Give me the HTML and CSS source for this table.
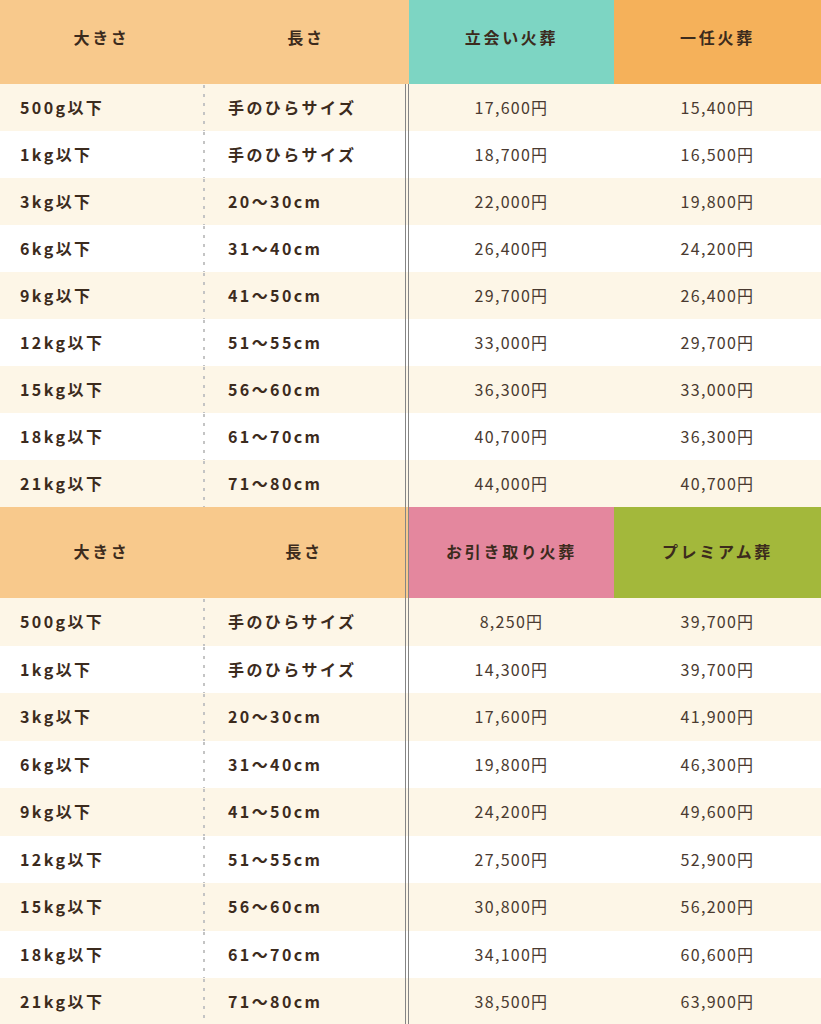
FILE: index.html
```html
<!DOCTYPE html>
<html lang="ja">
<head>
<meta charset="utf-8">
<title>料金表</title>
<link rel="stylesheet" href="styles.css">
</head>
<body>
<div class="price-table first">
  <div class="row head">
    <div class="cell c1">大きさ</div>
    <div class="cell c2">長さ</div>
    <div class="cell c3 teal">立会い火葬</div>
    <div class="cell c4 orange">一任火葬</div>
  </div>
  <div class="row"><div class="cell c1">500g以下</div><div class="cell c2">手のひらサイズ</div><div class="cell c3">17,600円</div><div class="cell c4">15,400円</div></div>
  <div class="row"><div class="cell c1">1kg以下</div><div class="cell c2">手のひらサイズ</div><div class="cell c3">18,700円</div><div class="cell c4">16,500円</div></div>
  <div class="row"><div class="cell c1">3kg以下</div><div class="cell c2">20〜30cm</div><div class="cell c3">22,000円</div><div class="cell c4">19,800円</div></div>
  <div class="row"><div class="cell c1">6kg以下</div><div class="cell c2">31〜40cm</div><div class="cell c3">26,400円</div><div class="cell c4">24,200円</div></div>
  <div class="row"><div class="cell c1">9kg以下</div><div class="cell c2">41〜50cm</div><div class="cell c3">29,700円</div><div class="cell c4">26,400円</div></div>
  <div class="row"><div class="cell c1">12kg以下</div><div class="cell c2">51〜55cm</div><div class="cell c3">33,000円</div><div class="cell c4">29,700円</div></div>
  <div class="row"><div class="cell c1">15kg以下</div><div class="cell c2">56〜60cm</div><div class="cell c3">36,300円</div><div class="cell c4">33,000円</div></div>
  <div class="row"><div class="cell c1">18kg以下</div><div class="cell c2">61〜70cm</div><div class="cell c3">40,700円</div><div class="cell c4">36,300円</div></div>
  <div class="row"><div class="cell c1">21kg以下</div><div class="cell c2">71〜80cm</div><div class="cell c3">44,000円</div><div class="cell c4">40,700円</div></div>
</div>
<div class="price-table second">
  <div class="row head">
    <div class="cell c1">大きさ</div>
    <div class="cell c2">長さ</div>
    <div class="cell c3 pink">お引き取り火葬</div>
    <div class="cell c4 green">プレミアム葬</div>
  </div>
  <div class="row"><div class="cell c1">500g以下</div><div class="cell c2">手のひらサイズ</div><div class="cell c3">8,250円</div><div class="cell c4">39,700円</div></div>
  <div class="row"><div class="cell c1">1kg以下</div><div class="cell c2">手のひらサイズ</div><div class="cell c3">14,300円</div><div class="cell c4">39,700円</div></div>
  <div class="row"><div class="cell c1">3kg以下</div><div class="cell c2">20〜30cm</div><div class="cell c3">17,600円</div><div class="cell c4">41,900円</div></div>
  <div class="row"><div class="cell c1">6kg以下</div><div class="cell c2">31〜40cm</div><div class="cell c3">19,800円</div><div class="cell c4">46,300円</div></div>
  <div class="row"><div class="cell c1">9kg以下</div><div class="cell c2">41〜50cm</div><div class="cell c3">24,200円</div><div class="cell c4">49,600円</div></div>
  <div class="row"><div class="cell c1">12kg以下</div><div class="cell c2">51〜55cm</div><div class="cell c3">27,500円</div><div class="cell c4">52,900円</div></div>
  <div class="row"><div class="cell c1">15kg以下</div><div class="cell c2">56〜60cm</div><div class="cell c3">30,800円</div><div class="cell c4">56,200円</div></div>
  <div class="row"><div class="cell c1">18kg以下</div><div class="cell c2">61〜70cm</div><div class="cell c3">34,100円</div><div class="cell c4">60,600円</div></div>
  <div class="row"><div class="cell c1">21kg以下</div><div class="cell c2">71〜80cm</div><div class="cell c3">38,500円</div><div class="cell c4">63,900円</div></div>
</div>
</body>
</html>
```
FILE: styles.css
```css
html, body {
  margin: 0;
  padding: 0;
  background: #fff;
}
body {
  font-family: "Noto Sans CJK JP", "Noto Sans", sans-serif;
  color: #3c2b1d;
  width: 821px;
  overflow: hidden;
}
.price-table.first {
  margin-top: -7px;
}
.row {
  display: grid;
  grid-template-columns: 203px 206px 205px 207px;
  height: 47px;
}
.row:nth-child(even) {
  background: #fdf6e7;
}
.row:nth-child(odd) {
  background: #ffffff;
}
.second .row:not(.head) {
  height: 47.5px;
}
.cell {
  display: flex;
  align-items: center;
  box-sizing: border-box;
  font-size: 16px;
  line-height: 1;
  white-space: nowrap;
  padding-bottom: 1px;
}
.row .c1,
.row .c2 {
  font-weight: 700;
  letter-spacing: 0.15em;
}
.row .c1 {
  padding-left: 20px;
}
.row .c2 {
  padding-left: 25px;
  background-image: linear-gradient(#c4c4c4 3px, transparent 3px);
  background-size: 2px 9px;
  background-repeat: repeat-y;
  background-position: 0 1px;
  border-right: 4px double #858585;
}
.row .c3,
.row .c4 {
  justify-content: center;
  color: #4a3a30;
  font-weight: 400;
  letter-spacing: 0.08em;
}
.row.head {
  height: 91px;
  background: #f8c98c;
}
.row.head .cell {
  justify-content: center;
  padding-left: 0;
  padding-bottom: 3px;
  font-weight: 700;
  color: #3c2b1d;
  letter-spacing: 0.17em;
  background-image: none;
}
.first .row.head .c2 {
  border-right: none;
}
.row.head .teal { background: #7dd5c3; }
.row.head .orange { background: #f5b15a; }
.row.head .pink { background: #e4879e; }
.row.head .green { background: #a3b83b; }
```
